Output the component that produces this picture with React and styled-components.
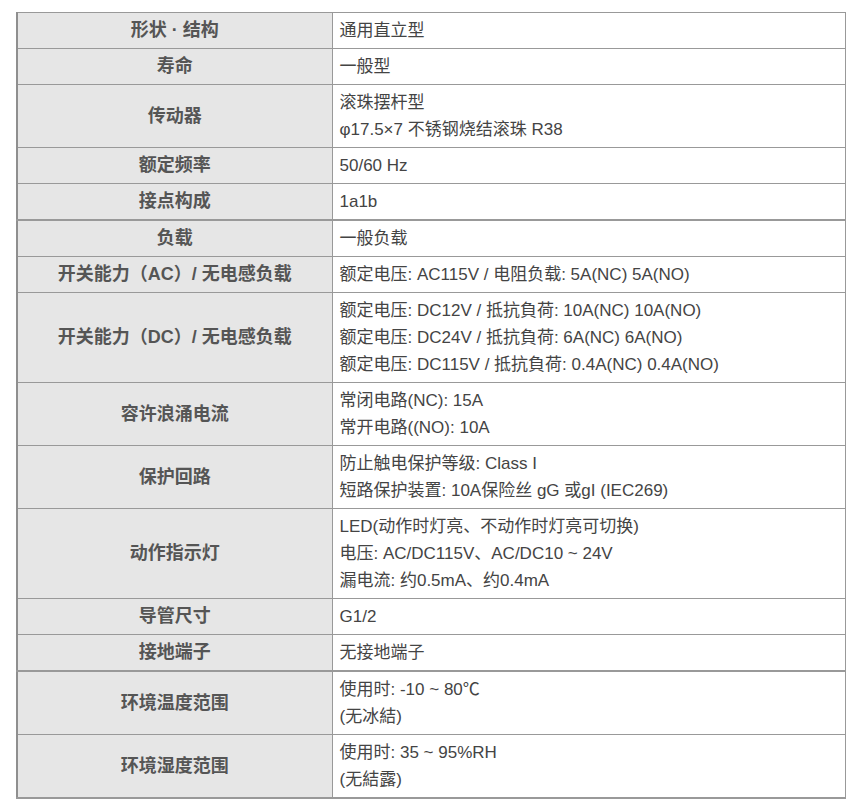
import React from "react";
import styled, { createGlobalStyle } from "styled-components";

const Global = createGlobalStyle`
  html, body { margin: 0; padding: 0; background: #ffffff; }
  body { font-family: "Liberation Sans", Arial, "Noto Sans CJK SC", sans-serif; }
`;

const Page = styled.div`
  padding: 12px 16px 0 16px;
  width: 862px;
  box-sizing: border-box;
`;

const Table = styled.table`
  width: 830px;
  border-collapse: collapse;
  border-left: 2px solid #8f8f8f;
  border-right: 1px solid #999;
  border-top: 1px solid #999;
  border-bottom: 2px solid #999;
  table-layout: fixed;
`;

const LabelCol = styled.col`
  width: 315px;
`;

const Row = styled.tr`
  border-top: ${(p) => (p.$thick ? "2px" : "1px")} solid #999;
`;

const Label = styled.th`
  background: #e6e6e6;
  color: #555;
  font-family: "Liberation Sans", Arial, "Noto Sans CJK SC", sans-serif;
  font-weight: bold;
  font-size: 18px;
  text-align: center;
  vertical-align: middle;
  border-right: 1px solid #999;
  padding: 4px 4px;
  line-height: 27px;
  white-space: nowrap;
`;

const Value = styled.td`
  background: #fff;
  color: #444;
  font-size: 17px;
  line-height: 27px;
  padding: 4px 7px 4px 7px;
  vertical-align: middle;
  text-align: left;
`;

const Line = styled.div`
  white-space: nowrap;
`;

const rows = [
  ["形状 · 结构", ["通用直立型"]],
  ["寿命", ["一般型"]],
  ["传动器", ["滚珠摆杆型", "φ17.5×7 不锈钢烧结滚珠 R38"]],
  ["额定频率", ["50/60 Hz"]],
  ["接点构成", ["1a1b"]],
  ["负载", ["一般负载"], true],
  ["开关能力（AC）/ 无电感负载", ["额定电压: AC115V / 电阻负载: 5A(NC) 5A(NO)"]],
  [
    "开关能力（DC）/ 无电感负载",
    [
      "额定电压: DC12V / 抵抗負荷: 10A(NC) 10A(NO)",
      "额定电压: DC24V / 抵抗負荷: 6A(NC) 6A(NO)",
      "额定电压: DC115V / 抵抗負荷: 0.4A(NC) 0.4A(NO)",
    ],
  ],
  ["容许浪涌电流", ["常闭电路(NC): 15A", "常开电路((NO): 10A"]],
  ["保护回路", ["防止触电保护等级: Class I", "短路保护装置: 10A保险丝 gG 或gI (IEC269)"]],
  [
    "动作指示灯",
    ["LED(动作时灯亮、不动作时灯亮可切换)", "电压: AC/DC115V、AC/DC10 ~ 24V", "漏电流: 约0.5mA、约0.4mA"],
  ],
  ["导管尺寸", ["G1/2"]],
  ["接地端子", ["无接地端子"]],
  ["环境温度范围", ["使用时: -10 ~ 80℃", "(无冰結)"], true],
  ["环境湿度范围", ["使用时: 35 ~ 95%RH", "(无結露)"]],
];

export default function App() {
  return (
    <Page>
      <Global />
      <Table>
        <colgroup>
          <LabelCol />
          <col />
        </colgroup>
        <tbody>
          {rows.map(([label, lines, thick], i) => (
            <Row key={i} $thick={thick}>
              <Label>{label}</Label>
              <Value>
                {lines.map((l, j) => (
                  <Line key={j}>{l}</Line>
                ))}
              </Value>
            </Row>
          ))}
        </tbody>
      </Table>
    </Page>
  );
}
